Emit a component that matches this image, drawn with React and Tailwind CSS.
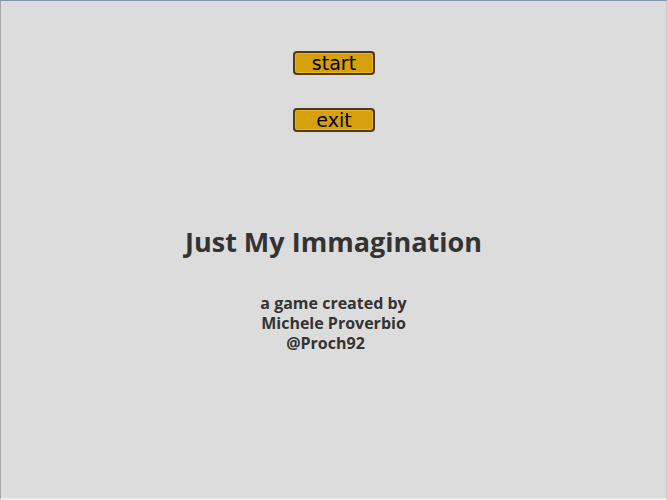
export default function App() {
  return (
    <div className="w-[667px] h-[500px] bg-[#dcdcdc] border-t border-t-[#8193b5] border-l border-l-[#a8a8a8] border-r border-r-[#c8c8c8] border-b-2 border-b-[#eeeeee] flex flex-col items-center overflow-hidden">
      {/* Menu */}
      <div className="flex flex-col items-center gap-[33px] mt-[50px] ml-[1px]">
        <button className="w-[82px] h-[24px] rounded-[4px] border-2 border-[#4e3a16] bg-[#d6a00a] shadow-[inset_0_0_0_1px_#e6b32c] text-black text-[19px] leading-none font-['DejaVu_Sans',sans-serif]">
          start
        </button>
        <button className="w-[82px] h-[24px] rounded-[4px] border-2 border-[#4e3a16] bg-[#d6a00a] shadow-[inset_0_0_0_1px_#e6b32c] text-black text-[19px] leading-none font-['DejaVu_Sans',sans-serif]">
          exit
        </button>
      </div>

      {/* Title */}
      <h1 className="mt-[96px] text-[27px] leading-none font-bold text-[#333333] font-['Open_Sans',sans-serif]">
        Just My Immagination
      </h1>

      {/* Credits */}
      <div className="mt-[38px] text-center text-[16px] leading-[20px] font-bold text-[#333333] font-['Open_Sans',sans-serif]">
        <p>a game created by</p>
        <p>Michele Proverbio</p>
        <p className="pr-[16px]">@Proch92</p>
      </div>
    </div>
  )
}
